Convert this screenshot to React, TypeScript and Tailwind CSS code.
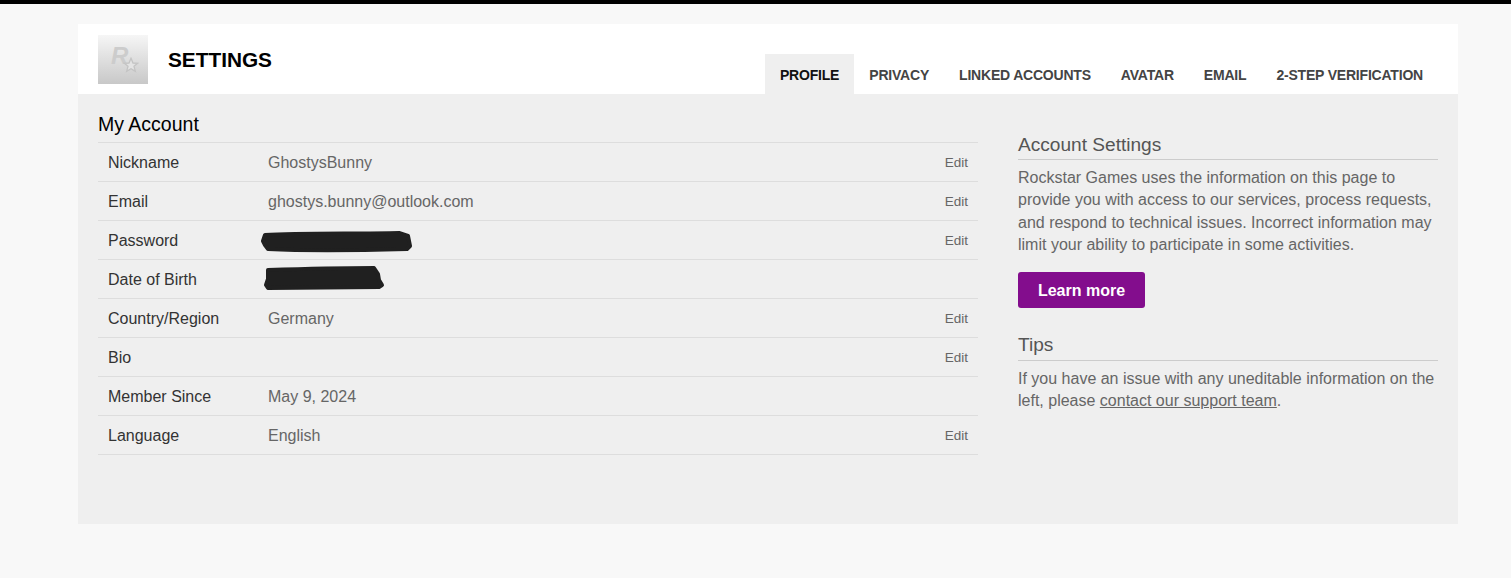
const font = "font-['Liberation_Sans',Arial,sans-serif]";

const tabs = ["PROFILE", "PRIVACY", "LINKED ACCOUNTS", "AVATAR", "EMAIL", "2-STEP VERIFICATION"];

function PasswordScribble() {
  return (
    <svg width="156" height="24" viewBox="0 0 156 24" className="-ml-[9px] block">
      <path
        d="M6 6 C40 4 100 5 140 4 L149 7 L150 12 L151 17 L148 20 C110 21 50 22 9 20 L6 16 L4 12 Z"
        fill="#202020"
        stroke="#202020"
        strokeWidth="4"
        strokeLinejoin="round"
      />
    </svg>
  );
}

function BirthScribble() {
  return (
    <svg width="128" height="28" viewBox="0 0 128 28" className="-ml-[9px] block">
      <path
        d="M9 4 C40 3 90 2 115 2 L119 8 L120 14 L123 19 L120 21 L9 22 L7 19 L9 13 Z"
        fill="#202020"
        stroke="#202020"
        strokeWidth="4"
        strokeLinejoin="round"
      />
    </svg>
  );
}

function Row({
  label,
  value,
  edit = false,
}: {
  label: string;
  value?: React.ReactNode;
  edit?: boolean;
}) {
  return (
    <div className="flex h-[39px] items-center border-b border-[#dddddd] pl-[10px] pr-[10px] pt-px">
      <div className="w-[160px] text-[16px] text-[#333333]">{label}</div>
      <div className="flex-1 text-[16px] text-[#666666]">{value}</div>
      {edit && <div className="pt-px text-[13.5px] text-[#666666]">Edit</div>}
    </div>
  );
}

function Logo() {
  return (
    <div className="relative mt-[11px] h-[49px] w-[50px] overflow-hidden bg-gradient-to-b from-[#f6f6f6] to-[#c8c8c8]">
      <span className="absolute left-[13px] top-[7px] text-[24px] font-bold italic leading-[28px] text-[#cccccc]">
        R
      </span>
      <svg width="16" height="16" viewBox="0 0 24 24" className="absolute left-[25px] top-[22px]">
        <path
          d="M12 2 L15 9 L22 9.5 L16.5 14 L18.5 21.5 L12 17.5 L5.5 21.5 L7.5 14 L2 9.5 L9 9 Z"
          fill="#e4e4e4"
          stroke="#c4c4c4"
          strokeWidth="2"
        />
      </svg>
    </div>
  );
}

export default function App() {
  return (
    <div className={`${font} min-h-[578px] border-t-4 border-black bg-[#f8f8f8] px-[78px] pt-[20px] pb-[54px]`}>
      <div className="w-[1380px]">
        <div className="flex h-[70px] items-start justify-between bg-white pl-[20px] pr-[20px]">
          <div className="flex items-start">
            <Logo />
            <h1 className="ml-[20px] mt-[22px] text-[20.8px] font-bold leading-[28px] text-black">SETTINGS</h1>
          </div>
          <div className="mt-[30px] flex">
            {tabs.map((tab, i) => (
              <div
                key={tab}
                className={
                  i === 0
                    ? "flex h-[40px] items-center bg-[#efefef] px-[15px] pt-[3px] text-[14px] font-bold tracking-[-0.2px] text-[#111111]"
                    : "flex h-[40px] items-center px-[15px] pt-[3px] text-[14px] font-bold tracking-[-0.2px] text-[#444444]"
                }
              >
                {tab}
              </div>
            ))}
          </div>
        </div>

        <div className="flex h-[430px] bg-[#efefef] px-[20px]">
          <div className="w-[880px]">
            <h2 className="mt-[18px] h-[31px] border-b border-[#dddddd] text-[19.5px] leading-[25px] text-black">My Account</h2>
            <Row label="Nickname" value="GhostysBunny" edit />
            <Row label="Email" value="ghostys.bunny@outlook.com" edit />
            <Row label="Password" value={<PasswordScribble />} edit />
            <Row label="Date of Birth" value={<BirthScribble />} />
            <Row label="Country/Region" value="Germany" edit />
            <Row label="Bio" edit />
            <Row label="Member Since" value="May 9, 2024" />
            <Row label="Language" value="English" edit />
          </div>

          <div className="ml-[40px] w-[420px] pt-[38px]">
            <h3 className="h-[28px] border-b border-[#cccccc] text-[19.1px] leading-[25px] text-[#555555]">Account Settings</h3>
            <p className="mt-[7px] text-[16px] leading-[22.4px] text-[#666666]">
              Rockstar Games uses the information on this page to provide you with access to our services, process requests, and respond to technical issues. Incorrect information may limit your ability to participate in some activities.
            </p>
            <button className="mt-[15.4px] block h-[36px] w-[127px] rounded-[3px] bg-[#830d8d] pt-px text-[16px] font-bold text-white">
              Learn more
            </button>
            <h3 className="mt-[24px] h-[29px] border-b border-[#cccccc] text-[19.1px] leading-[25px] text-[#555555]">Tips</h3>
            <p className="mt-[7px] text-[16px] leading-[22.4px] text-[#666666]">
              If you have an issue with any uneditable information on the left, please <span className="underline">contact our support team</span>.
            </p>
          </div>
        </div>
      </div>
    </div>
  );
}
